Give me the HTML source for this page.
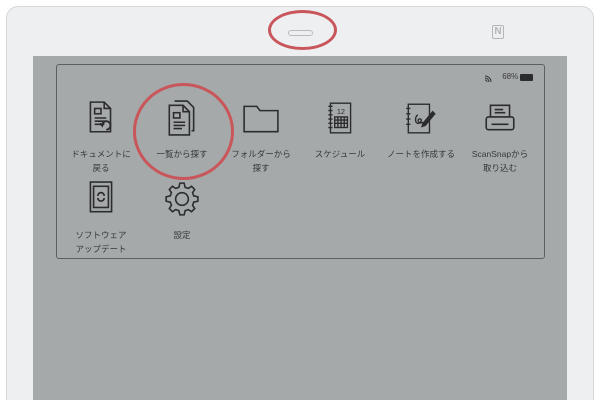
<!DOCTYPE html>
<html><head><meta charset="utf-8"><style>
*{margin:0;padding:0;box-sizing:border-box}
html,body{width:600px;height:400px;overflow:hidden}
body{background:#fff;position:relative;font-family:"Liberation Sans","Noto Sans CJK JP",sans-serif}
.dev{position:absolute;left:6px;top:6px;width:588px;height:394px;background:#eeeff1;border:1px solid #d8d8da;border-bottom:none;border-radius:12px 12px 0 0}
.scr{position:absolute;left:33px;top:56px;width:534px;height:344px;background:#a6a9a9}
.panel{position:absolute;left:56px;top:64px;width:489px;height:195px;border:1px solid #5d6062;border-radius:3px}
.it{position:absolute;width:90px;text-align:center;font-size:8.5px;line-height:14px;color:#35383a}
.it svg{display:block;margin:0 auto 11px}
</style></head><body>
<div class="dev"></div>
<div style="position:absolute;left:288px;top:30px;width:25px;height:6px;border:1px solid #b9babc;border-radius:3px"></div>
<div style="position:absolute;left:268px;top:10px;width:69px;height:40px;border:3px solid #c9565a;border-radius:50%"></div>
<div style="position:absolute;left:492px;top:25px;width:12px;height:14px;border:1px solid #b4b5b8;border-radius:2px;font-size:10px;color:#b4b5b8;text-align:center;line-height:12px;font-weight:bold">N</div>
<div class="scr"></div>
<div class="panel"></div>
<div style="position:absolute;left:484px;top:72px;font-size:8px;color:#333">
<svg width="10" height="10" viewBox="0 0 10 10" style="vertical-align:middle"><path d="M1 4a6 6 0 0 1 6 6M1 6a4 4 0 0 1 4 4M1 8a2 2 0 0 1 2 2" stroke="#333" fill="none"/></svg>
<span style="margin-left:6px;color:#3a3c3e">68%</span>
<span style="display:inline-block;width:13px;height:7px;background:#2a2c2e;vertical-align:middle;border-radius:1px"></span></div>

<div class="it" style="left:56px;top:100px">
<svg width="30" height="36" viewBox="0 0 28 34" fill="none" stroke="#2a2c2e" stroke-width="1.5"><path d="M4 2h13l6 6v22H4z M17 2v6h6"/><rect x="8" y="8" width="6" height="5"/><path d="M8 17h11M8 20h11M8 23h8"/><path d="M19 28a4 4 0 1 0 -4-4l-2-2m2 2l2-2" stroke-width="1.8"/></svg>
<div>ドキュメントに<br>戻る</div></div>

<div class="it" style="left:137px;top:100px">
<svg width="32" height="36" viewBox="0 0 30 34" fill="none" stroke="#2a2c2e" stroke-width="1.5"><path d="M8 1h12l6 6v22h-2"/><path d="M3 5h13l6 6v22H3z M16 5v6h6"/><rect x="7" y="12" width="6" height="5"/><path d="M7 21h11M7 24h11M7 27h8"/></svg>
<div>一覧から探す</div></div>

<div class="it" style="left:216px;top:100px">
<svg width="38" height="36" viewBox="0 0 36 34" fill="none" stroke="#2a2c2e" stroke-width="1.5"><path d="M2 6h12l3 4h17v20H2z"/></svg>
<div>フォルダーから<br>探す</div></div>

<div class="it" style="left:295px;top:100px">
<svg width="28" height="36" viewBox="0 0 26 34" fill="none" stroke="#2a2c2e" stroke-width="1.3"><rect x="4" y="3" width="19" height="28"/><path d="M2 6h4M2 10h4M2 14h4M2 18h4M2 22h4M2 26h4"/><rect x="8" y="16" width="12" height="10"/><path d="M11 16v10M14 16v10M17 16v10M8 19h12M8 22h12"/><text x="10" y="13" font-size="7" fill="#2a2c2e" stroke="none" font-family="Liberation Sans">12</text></svg>
<div>スケジュール</div></div>

<div class="it" style="left:376px;top:100px">
<svg width="36" height="36" viewBox="0 0 34 34" fill="none" stroke="#2a2c2e" stroke-width="1.3"><rect x="5" y="4" width="20" height="27"/><path d="M3 8h4M3 13h4M3 18h4M3 23h4"/><path d="M14 14c-3 2-3 9 1 8 3-1 3-5 0-4-2 1 0 5 4 3" /><path d="M19 22l9-11 2 2-9 11-3 1z" fill="#2a2c2e"/></svg>
<div>ノートを作成する</div></div>

<div class="it" style="left:455px;top:100px">
<svg width="32" height="36" viewBox="0 0 30 34" fill="none" stroke="#2a2c2e" stroke-width="1.5"><path d="M6 16V5h18v11"/><path d="M10 9h8M10 12h10"/><rect x="2" y="16" width="26" height="12" rx="2"/><path d="M7 23h16"/></svg>
<div>ScanSnapから<br>取り込む</div></div>

<div class="it" style="left:56px;top:181px">
<svg width="30" height="36" viewBox="0 0 28 34" fill="none" stroke="#2a2c2e" stroke-width="1.5"><rect x="4" y="1" width="20" height="28"/><rect x="7" y="5" width="14" height="20"/><path d="M11 14a3 3 0 0 1 6 0M17 16a3 3 0 0 1 -6 0" stroke-width="1.6"/></svg>
<div>ソフトウェア<br>アップデート</div></div>

<div class="it" style="left:137px;top:181px">
<svg width="34" height="36" viewBox="0 0 32 34" fill="none" stroke="#2a2c2e" stroke-width="1.5"><path d="M14 2h4l1 4 3 1 3-2 3 3-2 3 1 3 4 1v4l-4 1-1 3 2 3-3 3-3-2-3 1-1 4h-4l-1-4-3-1-3 2-3-3 2-3-1-3-4-1v-4l4-1 1-3-2-3 3-3 3 2 3-1z"/><circle cx="16" cy="17" r="6"/></svg>
<div>設定</div></div>

<div style="position:absolute;left:133px;top:83px;width:101px;height:97px;border:3px solid #c9565a;border-radius:50%"></div>
</body></html>
